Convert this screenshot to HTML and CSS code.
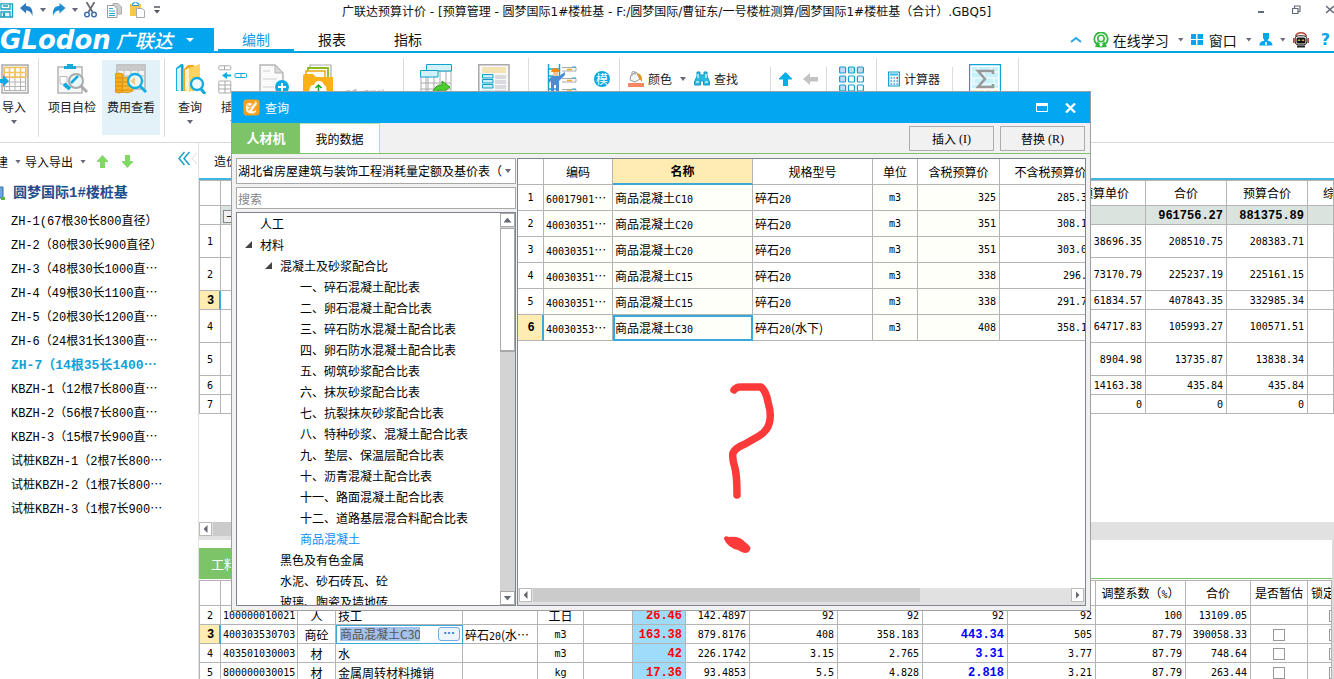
FILE: index.html
```html
<!DOCTYPE html>
<html lang="zh-CN">
<head>
<meta charset="utf-8">
<title>广联达预算计价</title>
<link rel="stylesheet" href="styles.css">
</head>
<body>
<div class="app">

<header class="titlebar">
  <div class="quick">
    <button aria-label="保存"><svg width="14" height="15" viewBox="0 0 14 15"><path d="M-1 .8H12.5V14H-1M1 1V6H10V1M3 3H8M1 14V9H10V14" fill="#e9f8fd" stroke="#1b9fc0" stroke-width="1.3"/><path d="M4 10v4" stroke="#1b9fc0" stroke-width="2"/></svg></button>
    <button aria-label="撤销"><svg width="14" height="14" viewBox="0 0 14 14"><path d="M0 5L6 0V3C11 3 13 6 12.5 13C11 9 9 7.500 6 7.500V10.500Z" fill="#2f79c0"/></svg></button>
    <i class="caret"></i>
    <button aria-label="重做"><svg width="14" height="14" viewBox="0 0 14 14"><path d="M13.500 5L7.500 0V3C2.500 3 .5 6 1 13C2.500 9 4.500 7.500 7.500 7.500V10.500Z" fill="#1d8fd0"/></svg></button>
    <i class="caret"></i>
    <button class="cut" aria-label="剪切"><svg width="13" height="16" viewBox="0 0 13 16"><path d="M2.500 0L8.500 10M10.500 0L4.500 10" stroke="#6b6b73" stroke-width="1.800"/><circle cx="3" cy="12.500" r="2.300" fill="none" stroke="#3f6da8" stroke-width="1.500"/><circle cx="10" cy="12.500" r="2.300" fill="none" stroke="#3f6da8" stroke-width="1.500"/></svg></button>
    <button class="copy" aria-label="复制"><svg width="15" height="15" viewBox="0 0 15 15"><path d="M6 .5H11L14.500 4V11H6Z" fill="#cfcfcf" stroke="#aaa"/><path d="M.5 2.500H7L10 5.500V14.500H.5Z" fill="#fff" stroke="#9a9a9a"/><path d="M2 5.500H6M2 8H8M2 10.500H8M2 12.500H8" stroke="#2aa5cf"/></svg></button>
    <button aria-label="粘贴"><svg width="15" height="16" viewBox="0 0 15 16"><path d="M0 2H11V14H0Z" fill="#fcc64c"/><path d="M2.500 3.500H8.500V1.500H7V0H4V1.500H2.500Z" fill="#fff" stroke="#12a4cf"/><path d="M6.500 6.500H12L14.500 8.500V15.500H6.500Z" fill="#fff" stroke="#aaa"/></svg></button>
    <svg class="more" width="6" height="8" viewBox="0 0 6 8"><path d="M0 1H6" stroke="#555560" stroke-width="1.500"/><path d="M0 4H6L3 7.500Z" fill="#555560"/></svg>
  </div>
  <h1>广联达预算计价 - [预算管理 - 圆梦国际1#楼桩基 - F:/圆梦国际/曹钲东/一号楼桩测算/圆梦国际1#楼桩基（合计）.GBQ5]</h1>
  <div class="winctl">
    <button aria-label="最小化"><svg width="9" height="9" viewBox="0 0 9 9"><path d="M1 7H7" stroke="#666b7c" stroke-width="2"/></svg></button>
    <button aria-label="还原"><svg width="9" height="9" viewBox="0 0 9 9"><path d="M2.500 3V1H8V6.500H6.500M.5 3.500H6V8.500H.5Z" fill="none" stroke="#666b7c" stroke-width="1.200"/></svg></button>
    <button aria-label="关闭"><svg width="8" height="9" viewBox="0 0 8 9"><path d="M0 1L8 8M8 1L0 8" stroke="#666b7c" stroke-width="1.600"/></svg></button>
  </div>
</header>

<nav class="menubar">
  <div class="logo"><span class="word">GLodon</span><span class="han">广联达</span><svg width="8" height="4" viewBox="0 0 8 4"><path d="M0 0H8L4 4Z" fill="#fff"/></svg></div>
  <a href="#" class="mtab on">编制</a><a href="#" class="mtab">报表</a><a href="#" class="mtab">指标</a>
  <div class="mright">
    <svg class="chev" width="12" height="7" viewBox="0 0 12 7"><path d="M1 6L6 2L11 6" fill="none" stroke="#2aa9e6" stroke-width="2"/></svg>
    <button class="learn"><svg width="16" height="16" viewBox="0 0 16 16"><circle cx="8" cy="7" r="6.700" fill="none" stroke="#2fb83c" stroke-width="1.800"/><circle cx="8" cy="6.500" r="3.200" fill="#fff" stroke="#2fb83c" stroke-width="1.500"/><path d="M2 15L4.500 9.500L8 12.500L11.500 9.500L14 15L8 15.500Z" fill="#2fb83c"/><path d="M6 12H10L8 15Z" fill="#fff"/></svg>在线学习</button>
    <i class="caret"></i>
    <button class="win"><svg width="12" height="11" viewBox="0 0 12 11"><path d="M0 0H5V5H0ZM6.500 0H12V5H6.500ZM0 6H5V11H0ZM6.500 6H12V11H6.500Z" fill="#03a6ee"/></svg>窗口</button>
    <i class="caret"></i>
    <button aria-label="用户"><svg width="14" height="13" viewBox="0 0 14 13"><path d="M4 0H10V5L8.500 7.500C12 8.500 13.500 9.500 13.500 12.500H.5C.5 9.500 2 8.500 5.500 7.500L4 5Z" fill="#03a6ee"/><path d="M6.500 9L7 12L7.500 9" stroke="#fff"/></svg></button>
    <i class="caret"></i>
    <button aria-label="助手"><svg width="16" height="16" viewBox="0 0 16 16"><path d="M2.500 4.500Q3.500 .8 8 .8Q12.500 .8 13.500 4.500" fill="none" stroke="#b7453a" stroke-width="1.600"/><path d="M.8 6V11M15.200 6V11" stroke="#b7453a" stroke-width="1.600"/><rect x="2.200" y="3.800" width="11.600" height="9" rx="3" fill="#fff" stroke="#222"/><rect x="3.500" y="5.500" width="9" height="6" rx="1.500" fill="#111"/><path d="M5 9L6 7.500L7 9M9 9L10 7.500L11 9" fill="none" stroke="#f2d64a"/><path d="M4 14.500H12" stroke="#222" stroke-width="2"/></svg></button>
    <button class="help">?</button>
  </div>
</nav>

<div class="ribbon">
  <button class="rb w28"><svg width="30" height="30" viewBox="0 0 30 30"><path d="M3 1H29V29H3Z" fill="#f4f4f4" stroke="#aaa" stroke-width="1.500"/><path d="M5 3H27V27H5Z" fill="#fff"/><path d="M5.500 3V27M10.500 3V27M16 3V27M21.500 3V27M26.500 3V27M5 13.500H27M5 18H27M5 22.500H27M5 26.500H27" stroke="#b3b3b3"/><path d="M5 3.500H27V8.500H5ZM10.500 3V13M16 3V13M21.500 3V13M5 8.500V13H27V8" fill="none" stroke="#f8c15c" stroke-width="1.500"/><path d="M0 15H4V11L10 17L4 23V19H0Z" fill="#08aeea"/></svg><span>导入</span><i class="caret"></i></button>
  <i class="sep ml10"></i>
  <button class="rb w58 ml4"><svg width="32" height="30" viewBox="0 0 32 30"><path d="M2 3H26V29H2Z" fill="#f8f8f8" stroke="#b5b5b5" stroke-width="1.500"/><path d="M11 0H17V2H20V5H8V2H11Z" fill="#18a9d8"/><path d="M4 12.500H11V20H4Z" fill="#fff" stroke="#bbb"/><path d="M8 20L14 25" stroke="#12abdc" stroke-width="4"/><circle cx="20" cy="17" r="7" fill="#e9f6fa" stroke="#aaa" stroke-width="2"/><path d="M15 19L22 12" stroke="#18a9d8" stroke-width="2.500"/><path d="M25 22L31 28" stroke="#aaa" stroke-width="3"/></svg><span>项目自检</span></button>
  <button class="rb w58 ml1 hot"><svg width="32" height="30" viewBox="0 0 32 30"><path d="M2 1H30V25H2Z" fill="#f3f3f3" stroke="#b5b5b5" stroke-width="1.500"/><path d="M2 2H30V7H2Z" fill="#c9c9c9"/><path d="M2 12H30M2 17H30M9 7V25M16 7V25M23 7V25" stroke="#bbb"/><path d="M0 10Q4 8 8 10V28Q4 30 0 28Z" fill="#f9ae17" stroke="#d68b13" stroke-width=".8"/><path d="M8 14Q13 12 18 14V27Q13 30 7 28Z" fill="#fbb930" stroke="#d68b13" stroke-width=".8"/><path d="M0 14H8M0 18H8M0 22H17M0 26H17M8 18H15" stroke="#d68b13"/><circle cx="20" cy="17" r="7" fill="#f0f5ee" stroke="#12aee4" stroke-width="2.300"/><path d="M15 17L20 13V21Z" fill="#f6c98b"/><path d="M25 22L31 28" stroke="#12aee4" stroke-width="3"/></svg><span>费用查看</span></button>
  <i class="sep ml4"></i>
  <button class="rb w30 ml10"><svg width="31" height="30" viewBox="0 0 31 30"><path d="M1 4L6 0H8V27H1Z" fill="#1caed8"/><path d="M2 5L6 3V28L2 26Z" fill="#d8f3fb"/><path d="M9 5L13 1H19V27H9Z" fill="#efa81f"/><path d="M10 6L14 4V28L10 26Z" fill="#fff2cc"/><path d="M14 4L25 0V24L14 28Z" fill="#ffd35f"/><path d="M8 1V27" stroke="#128db7"/><circle cx="22" cy="20" r="6" fill="#effafd" stroke="#0faae0" stroke-width="2.300"/><path d="M26 25L30 30" stroke="#0faae0" stroke-width="3"/></svg><span>查询</span><i class="caret"></i></button>
  <button class="rb w30 ml13"><svg width="30" height="30" viewBox="0 0 30 30"><rect x=".8" y="1.800" width="12" height="4" rx="1" fill="#fff" stroke="#aaa"/><path d="M6.500 2V6" stroke="#aaa"/><rect x=".8" y="17" width="12" height="12" rx="1" fill="#fff" stroke="#aaa"/><path d="M1 21H13M1 25H13M7 17V29" stroke="#aaa"/><path d="M4 11.500L9 8V10.500H13V12.500H9V15Z" fill="#0faae0"/><rect x="17" y="9.500" width="11.500" height="4" rx="1" fill="#fff" stroke="#0faae0"/><path d="M23 9.500V13" stroke="#0faae0"/></svg><span>插入</span><i class="caret"></i></button>
  <button class="rb w30 ml11" aria-label="补充"><svg width="30" height="30" viewBox="0 0 30 30"><path d="M1 1H16L24 9V30H1Z" fill="#fafafa" stroke="#b5b5b5" stroke-width="1.500"/><path d="M16 1V9H24Z" fill="#d9d9d9" stroke="#b5b5b5"/><path d="M4 7H11M4 15H18M4 23H15" stroke="#ddd" stroke-width="1.500"/><circle cx="23" cy="23" r="7" fill="#0faae6"/><path d="M19 23H27M23 19V27" stroke="#fff" stroke-width="2"/></svg></button>
  <button class="rb w30 ml14" aria-label="存档"><svg width="30" height="30" viewBox="0 0 30 30"><path d="M7 8V1H28V14" fill="#fff" stroke="#aaa" stroke-width="1.200"/><path d="M5 10V4H25V14" fill="#fff" stroke="#8aba1c" stroke-width="1.800"/><path d="M3 12V7H22V14" fill="#fff" stroke="#e9a716" stroke-width="1.500"/><path d="M0 12Q0 10 2 10H10L13 13H30V30H0Z" fill="#fcb116"/><path d="M8 29Q5 27 7 24Q7 21 11 21Q12 17 16 17Q20 17 21 21Q24 22 23 25Q25 28 22 29Z" fill="#fff"/><path d="M15.500 28V21M12.500 24L15.500 21L18.500 24" fill="none" stroke="#18a81e" stroke-width="1.500"/></svg></button>
  <button class="rb w40 ml12" aria-label="更多"><svg width="40" height="30" viewBox="0 0 40 30"><path d="M0 28L4 26L6 28L11 25V30H0ZM19 27H23V26M25 27H31M33 27H36M38 25V30" fill="#ccc" stroke="#bbb"/></svg></button>
  <i class="sep ml18"></i>
  <button class="rb w32 ml16" aria-label="载价"><svg width="32" height="30" viewBox="0 0 32 30"><path d="M6 7H31V30H6Z" fill="#fff" stroke="#aaa"/><path d="M1 13V30M1 19H31M1 25H31M8 13V30M14 13V30M20 7V30M26 7V30" stroke="#aaa" fill="none"/><path d="M6.500 .5H31.500V7H6.500Z" fill="#d2f1fa" stroke="#0fa2cb"/><path d="M.5 6.500H18V13H.5Z" fill="#d2f1fa" stroke="#0fa2cb"/><path d="M12 30Q15 20 22 21V17L30 23L22 29V26Q16 26 15 30Z" fill="#4fcb32" stroke="#2e9e1c"/></svg></button>
  <button class="rb w32 ml26" aria-label="汇总"><svg width="32" height="30" viewBox="0 0 32 30"><path d="M.8 .8H31V31H.8Z" fill="#f8f8f8" stroke="#aaa" stroke-width="1.500"/><path d="M4 3H28V9H4Z" fill="#f4e3b5"/><path d="M17 11H28V15H17ZM17 16H28V20H17ZM17 21H28V25H17ZM17 26H28V30H17Z" fill="#d9d9de"/><path d="M4.500 10.500H15V14H4.500ZM4.500 15.500H15V19H4.500ZM4.500 20.500H15V24H4.500Z" fill="#c8eef9" stroke="#159fc9"/><path d="M4 26H16V30H4Z" fill="#c6ebf7"/></svg></button>
  <i class="sep ml18"></i>
  <button class="rb w30 ml18" aria-label="人工"><svg width="30" height="30" viewBox="0 0 30 30"><path d="M1.500 0V30M12.500 0V14M1 5H12M1 12H6M1 25H10" stroke="#19a7cf" stroke-width="1.500"/><path d="M4 8Q5 4 8 4Q12 4 13 8Z" fill="#f58b12"/><path d="M6 8H11V12H6Z" fill="#f3c394"/><path d="M2 15L5 12H12L18 8V11L12 17V28H9V21H7V29H4V17L2 19Z" fill="#4b8ed4"/><path d="M15 3.500H29V7H15M15 14.500H29V18H15M15 25.500H29V29H15" fill="#fafafa" stroke="#aaa"/><path d="M20 5.500H25M20 16.500H25M20 27H25" stroke="#f6a82d" stroke-width="1.500"/><path d="M25 3H29M25 14H29M25 25H29" stroke="#29a9d6"/></svg></button>
  <button class="rs ml17"><span class="mo">模</span></button>
  <i class="sep ml9"></i>
  <button class="rs txt ml8"><svg width="16" height="16" viewBox="0 0 16 16"><path d="M3 4L8 1L12 8L7 11L2 9Z" fill="#f7f7f7" stroke="#999"/><path d="M4 5V1Q6-1 7 1V4" fill="none" stroke="#999"/><path d="M9 2Q15 3 14 11L11 7Z" fill="#e5921c"/><path d="M0 12H16V16H0Z" fill="#f98663"/></svg>颜色<i class="caret lead"></i></button>
  <button class="rs txt ml8"><svg width="16" height="16" viewBox="0 0 16 16"><path d="M3 1H6V4H10V1H13V5L15.500 11V14H9.500V10H6.500V14H.5V11L3 5Z" fill="#2eb8dd" stroke="#1399c4"/><path d="M2 11H5M11 11H14M4 3V7M12 3V7" stroke="#bdeefa" stroke-width="1.500"/></svg>查找</button>
  <i class="sep short ml32"></i>
  <button class="rs ml8" aria-label="上移"><svg width="13" height="16" viewBox="0 0 13 16"><path d="M6.500 1L13 7.500V8.500H9V15H4V8.500H0V7.500Z" fill="#08aeea"/></svg></button>
  <button class="rs ml11" aria-label="左移"><svg width="15" height="16" viewBox="0 0 15 16"><path d="M0 8L7 2V6H15V10.500H7V14Z" fill="#c3c3c3"/></svg></button>
  <i class="sep short ml8"></i>
  <button class="rs grid ml12" aria-label="网格"><svg width="25" height="27" viewBox="0 0 25 27"><g fill="#bfdcec" stroke="#13a0cb" stroke-width="1.200"><rect x=".6" y="1" width="6" height="6" rx="1"/><rect x="9.500" y="1" width="6" height="6" rx="1"/><rect x="18.400" y="1" width="6" height="6" rx="1"/><rect x=".6" y="10" width="6" height="6" rx="1"/><rect x="9.500" y="10" width="6" height="6" rx="1" fill="#fff"/><rect x="18.400" y="10" width="6" height="6" rx="1" fill="#fff"/><rect x=".6" y="19" width="6" height="6" rx="1"/><rect x="9.500" y="19" width="6" height="6" rx="1" fill="#fff"/><rect x="18.400" y="19" width="6" height="6" rx="1" fill="#fff"/></g></svg></button>
  <i class="sep ml12"></i>
  <button class="rs txt ml11"><svg width="12" height="16" viewBox="0 0 12 16"><path d="M.6 1H11.400V15H.6Z" fill="#e9f8fd" stroke="#19a0ce" stroke-width="1.200"/><path d="M2 2.500H10V4.500H2Z" fill="#36bde4"/><path d="M2.500 7H4M5.500 7H7M2.500 10H4M5.500 10H7M8.500 10H10M2.500 13H4M5.500 13H7M8.500 13H10" stroke="#579dcd" stroke-width="1.500"/><path d="M8.500 7H10" stroke="#ef3e2c" stroke-width="2"/></svg>计算器</button>
  <i class="sep short ml12"></i>
  <button class="rb w32 ml16" aria-label="合计"><svg width="32" height="30" viewBox="0 0 32 30"><path d="M.6 .6H31.400V30H.6Z" fill="#fff" stroke="#0fa5d2" stroke-width="1.200"/><path d="M3 3H29V24H3Z" fill="#c9f1fa"/><path d="M3 8H29M3 14H29M3 20H29M9 3V8M22 3V8M15 8V14M5 14V20M25 14V20" stroke="#fff"/><path d="M3 26H8V30H3ZM10 26H15V30H10ZM17 26H22V30H17ZM24 26H29V30H24Z" fill="#faeab8"/><path d="M24 10V7H9L16 15L9 23H24V20" fill="none" stroke="#999" stroke-width="2.500"/></svg></button>
  <i class="sep ml17"></i>
</div>

<main class="main">
  <aside class="side">
    <div class="stools">
      <button class="newb">新建</button><i class="caret"></i><button>导入导出</button><i class="caret"></i>
      <button class="up" aria-label="上移"><svg width="11" height="13" viewBox="0 0 11 13"><path d="M5.500 0L11 6V7H8V13H3V7H0V6Z" fill="#80d865"/></svg></button>
      <button class="dn" aria-label="下移"><svg width="11" height="13" viewBox="0 0 11 13"><path d="M5.500 13L11 7V6H8V0H3V6H0V7Z" fill="#80d865"/></svg></button>
      <button class="fold" aria-label="收起"><svg width="20" height="16" viewBox="0 0 20 16"><path d="M6.500 1L1 7.500L6.500 14M11.500 1L6 7.500L11.500 14" fill="none" stroke="#1e9fc6" stroke-width="1.500"/><path d="M19 2L14 7.500L19 13" fill="none" stroke="#ddd"/></svg></button>
    </div>
    <div class="proj"><svg width="5" height="14" viewBox="0 0 5 14"><path d="M0 1H3V12H0" fill="#6da5d8" stroke="#336fa8"/><path d="M1 11H5V14H1Z" fill="#56b53b"/></svg>圆梦国际1#楼桩基</div>
    <ul class="list">
      <li>ZH-1(67根30长800直径）</li>
      <li>ZH-2（80根30长900直径）</li>
      <li>ZH-3（48根30长1000直<span class="c">…</span></li>
      <li>ZH-4（49根30长1100直<span class="c">…</span></li>
      <li>ZH-5（20根30长1200直<span class="c">…</span></li>
      <li>ZH-6（24根31长1300直<span class="c">…</span></li>
      <li class="cur">ZH-7（14根35长1400<span class="c">…</span></li>
      <li>KBZH-1（12根7长800直<span class="c">…</span></li>
      <li>KBZH-2（56根7长800直<span class="c">…</span></li>
      <li>KBZH-3（15根7长900直<span class="c">…</span></li>
      <li>试桩KBZH-1（2根7长800<span class="c">…</span></li>
      <li>试桩KBZH-2（1根7长800<span class="c">…</span></li>
      <li>试桩KBZH-3（1根7长900<span class="c">…</span></li>
    </ul>
  </aside>

  <section class="work">
    <div class="upper">
      <div class="utabs"><a href="#">造价分析</a></div>
      <table class="grid1">
        <colgroup><col class="k21"><col><col class="k81"><col class="k81"><col class="k81"><col class="k26"></colgroup>
        <thead><tr><th></th><th></th><th>预算单价</th><th>合价</th><th>预算合价</th><th class="cut">综合单价</th></tr></thead>
        <tbody>
          <tr class="sum"><td class="rn"></td><td class="tree"><button aria-label="折叠">−</button></td><td></td><td class="num">961756.27</td><td class="num">881375.89</td><td></td></tr>
          <tr class="tall"><td class="rn">1</td><td></td><td class="num">38696.35</td><td class="num">208510.75</td><td class="num">208383.71</td><td></td></tr>
          <tr class="tall"><td class="rn">2</td><td></td><td class="num">73170.79</td><td class="num">225237.19</td><td class="num">225161.15</td><td></td></tr>
          <tr><td class="rn sel">3</td><td></td><td class="num">61834.57</td><td class="num">407843.35</td><td class="num">332985.34</td><td></td></tr>
          <tr class="tall"><td class="rn">4</td><td></td><td class="num">64717.83</td><td class="num">105993.27</td><td class="num">100571.51</td><td></td></tr>
          <tr class="tall"><td class="rn">5</td><td></td><td class="num">8904.98</td><td class="num">13735.87</td><td class="num">13838.34</td><td></td></tr>
          <tr><td class="rn">6</td><td></td><td class="num">14163.38</td><td class="num">435.84</td><td class="num">435.84</td><td></td></tr>
          <tr><td class="rn">7</td><td></td><td class="num">0</td><td class="num">0</td><td class="num">0</td><td></td></tr>
        </tbody>
      </table>
    </div>
    <div class="hbar wide"><button aria-label="向左"><i class="al"></i></button><span class="thumb"></span></div>
    <div class="lower">
      <div class="ltabs"><a href="#">工料机显示</a></div>
      <table class="grid2">
        <colgroup><col class="k21"><col class="k77"><col class="k38"><col class="k127"><col class="k75"><col class="k46"><col class="k49"><col class="k53"><col class="k64"><col class="k88"><col class="k85"><col class="k85"><col class="k88"><col class="k90"><col class="k65"><col class="k57"><col></colgroup>
        <thead><tr><th></th><th></th><th></th><th></th><th></th><th></th><th></th><th></th><th></th><th></th><th></th><th></th><th></th><th>调整系数（<span class="n">%</span>）</th><th>合价</th><th>是否暂估</th><th class="lock">锁定</th></tr></thead>
        <tbody>
          <tr><td class="rn">2</td><td class="n">100000010021</td><td class="mid">人</td><td>技工</td><td></td><td class="mid">工日</td><td></td><td class="num red">26.46</td><td class="num">142.4897</td><td class="num">92</td><td class="num">92</td><td class="num">92</td><td class="num">92</td><td class="num">100</td><td class="num">13109.05</td><td></td><td class="box2"><input type="checkbox" aria-label="锁定"></td></tr>
          <tr><td class="rn sel">3</td><td class="n">400303530703</td><td class="mid">商砼</td><td class="edit"><div><input type="text" value="商品混凝土C30" aria-label="名称"><button>···</button></div></td><td>碎石<span class="n">20</span>(水…</td><td class="mid n">m3</td><td></td><td class="num red">163.38</td><td class="num">879.8176</td><td class="num">408</td><td class="num">358.183</td><td class="num blue">443.34</td><td class="num">505</td><td class="num">87.79</td><td class="num">390058.33</td><td class="mid"><input type="checkbox" aria-label="是否暂估"></td><td class="box2"><input type="checkbox" aria-label="锁定"></td></tr>
          <tr><td class="rn">4</td><td class="n">403501030003</td><td class="mid">材</td><td>水</td><td></td><td class="mid n">m3</td><td></td><td class="num red">42</td><td class="num">226.1742</td><td class="num">3.15</td><td class="num">2.765</td><td class="num blue">3.31</td><td class="num">3.77</td><td class="num">87.79</td><td class="num">748.64</td><td class="mid"><input type="checkbox" aria-label="是否暂估"></td><td class="box2"><input type="checkbox" aria-label="锁定"></td></tr>
          <tr><td class="rn">5</td><td class="n">800000030015</td><td class="mid">材</td><td>金属周转材料摊销</td><td></td><td class="mid n">kg</td><td></td><td class="num red">17.36</td><td class="num">93.4853</td><td class="num">5.5</td><td class="num">4.828</td><td class="num blue">2.818</td><td class="num">3.21</td><td class="num">87.79</td><td class="num">263.44</td><td class="mid"><input type="checkbox" aria-label="是否暂估"></td><td class="box2"><input type="checkbox" aria-label="锁定"></td></tr>
        </tbody>
      </table>
    </div>
  </section>
</main>

<div class="dialog" role="dialog" aria-label="查询">
  <div class="dtitle">
    <svg width="17" height="17" viewBox="0 0 17 17"><rect x=".5" y=".5" width="16" height="16" rx="3" fill="#f7a01f"/><path d="M3 6Q6 2 9 5L13 2L14 5L9 12Q12 13 13 10Q14 15 8 14.500Q3 14 3 10Z" fill="#fff3dc"/><path d="M4 6L7 8L12 3M5 11L8 9" fill="none" stroke="#f3a437" stroke-width="1.200"/></svg>
    <span>查询</span>
    <button class="dmax" aria-label="最大化"><svg width="12" height="9" viewBox="0 0 12 9"><path d="M.5 .5H11.500V8.500H.5Z" fill="none" stroke="#fff"/><path d="M0 1.500H12" stroke="#fff" stroke-width="3"/></svg></button>
    <button class="dcls" aria-label="关闭"><svg width="11" height="10" viewBox="0 0 11 10"><path d="M1 .5L10 9.500M10 .5L1 9.500" stroke="#fff" stroke-width="2.300"/></svg></button>
  </div>
  <div class="dtabs">
    <button class="t1">人材机</button><button class="t2">我的数据</button>
    <span class="fill"></span>
    <button class="act">插入<span class="s">(I)</span></button><button class="act">替换<span class="s">(R)</span></button>
  </div>
  <div class="dbody">
    <div class="lpane">
      <div class="combo"><select aria-label="定额"><option>湖北省房屋建筑与装饰工程消耗量定额及基价表（</option></select><i class="caret"></i></div>
      <input class="search" type="text" placeholder="搜索" aria-label="搜索">
      <div class="treebox">
        <ul class="nodes">
          <li class="l1">人工</li>
          <li class="l1 open">材料</li>
          <li class="l2 open">混凝土及砂浆配合比</li>
          <li class="l3">一、碎石混凝土配比表</li>
          <li class="l3">二、卵石混凝土配合比表</li>
          <li class="l3">三、碎石防水混凝土配合比表</li>
          <li class="l3">四、卵石防水混凝土配合比表</li>
          <li class="l3">五、砌筑砂浆配合比表</li>
          <li class="l3">六、抹灰砂浆配合比表</li>
          <li class="l3">七、抗裂抹灰砂浆配合比表</li>
          <li class="l3">八、特种砂浆、混凝土配合比表</li>
          <li class="l3">九、垫层、保温层配合比表</li>
          <li class="l3">十、沥青混凝土配合比表</li>
          <li class="l3">十一、路面混凝土配合比表</li>
          <li class="l3">十二、道路基层混合料配合比表</li>
          <li class="l3 act3">商品混凝土</li>
          <li class="l2">黑色及有色金属</li>
          <li class="l2">水泥、砂石砖瓦、砼</li>
          <li class="l2">玻璃、陶瓷及墙地砖</li>
        </ul>
        <div class="vbar"><button aria-label="向上"><i class="au"></i></button><span class="vthumb"></span><span class="vtrack"></span><button aria-label="向下"><i class="ad"></i></button></div>
      </div>
    </div>
    <div class="rpane">
      <table class="grid3">
        <colgroup><col class="k26"><col class="k69"><col><col class="k120"><col class="k45"><col class="k82"><col class="k102"></colgroup>
        <thead><tr><th></th><th>编码</th><th class="hsel">名称</th><th>规格型号</th><th>单位</th><th>含税预算价</th><th>不含税预算价</th></tr></thead>
        <tbody>
          <tr><td class="rn">1</td><td class="iv"><span class="n">60017901</span>…</td><td class="iv">商品混凝土<span class="n">C10</span></td><td>碎石<span class="n">20</span></td><td class="iv mid n">m3</td><td class="iv num">325</td><td class="num far">285.3</td></tr>
          <tr><td class="rn">2</td><td class="iv"><span class="n">40030351</span>…</td><td class="iv">商品混凝土<span class="n">C20</span></td><td>碎石<span class="n">20</span></td><td class="iv mid n">m3</td><td class="iv num">351</td><td class="num far">308.1</td></tr>
          <tr><td class="rn">3</td><td class="iv"><span class="n">40030351</span>…</td><td class="iv">商品混凝土<span class="n">C20</span></td><td>碎石<span class="n">20</span></td><td class="iv mid n">m3</td><td class="iv num">351</td><td class="num far">303.0</td></tr>
          <tr><td class="rn">4</td><td class="iv"><span class="n">40030351</span>…</td><td class="iv">商品混凝土<span class="n">C15</span></td><td>碎石<span class="n">20</span></td><td class="iv mid n">m3</td><td class="iv num">338</td><td class="num far">296.</td></tr>
          <tr><td class="rn">5</td><td class="iv"><span class="n">40030351</span>…</td><td class="iv">商品混凝土<span class="n">C15</span></td><td>碎石<span class="n">20</span></td><td class="iv mid n">m3</td><td class="iv num">338</td><td class="num far">291.7</td></tr>
          <tr><td class="rn sel">6</td><td class="iv"><span class="n">40030353</span>…</td><td class="iv focus">商品混凝土<span class="n">C30</span></td><td>碎石<span class="n">20</span>(水下)</td><td class="iv mid n">m3</td><td class="iv num">408</td><td class="num far">358.1</td></tr>
        </tbody>
      </table>
      <div class="hbar inner"><button aria-label="向左"><i class="al"></i></button><span class="thumb"></span><span class="fill"></span><button aria-label="向右"><i class="ar"></i></button></div>
      <svg class="mark" width="60" height="180" viewBox="0 0 60 180"><path d="M14 12Q16 9 21 9H41Q46 13 48 24Q52 37 49 46Q47 53 39 58L25 66Q15 70 13 75Q12 80 15 90Q17 98 17 117" fill="none" stroke="#fd3a3a" stroke-width="7.500" stroke-linecap="round" stroke-linejoin="round"/><path d="M4 161Q4 157 9 159Q20 158 25 164Q32 169 30 172Q27 178 18 172Q8 170 4 161Z" fill="#fd3a3a"/></svg>
    </div>
  </div>
</div>

</div>
</body>
</html>
```

FILE: styles.css
```css
* { box-sizing: border-box; }
html, body { height: 100%; margin: 0; }
body { font: 12px/16px "Noto Sans CJK SC", sans-serif; color: #111; background: #fff; overflow: hidden; }
button { border: 0; padding: 0; margin: 0; background: none; font: inherit; color: inherit; display: flex; align-items: center; flex: none; white-space: nowrap; }
svg { display: block; flex: none; overflow: hidden; }
a { color: inherit; text-decoration: none; }
ul { list-style: none; margin: 0; padding: 0; }
.app { position: relative; height: 100vh; display: flex; flex-direction: column; overflow: hidden; }
.caret { width: 6px; height: 4px; background: #666a78; clip-path: polygon(0 0, 100% 0, 50% 100%); flex: none; }
.fill { flex: 1; }

/* title bar */
.titlebar { height: 28px; flex: none; display: flex; padding-top: 2px; }
.titlebar h1 { margin: 0; font-size: 12px; font-weight: 400; line-height: 20px; font-family: "DejaVu Sans", "Noto Sans CJK SC", sans-serif; white-space: nowrap; }
.quick { width: 342px; flex: none; display: flex; align-items: center; height: 16px; gap: 6px; }
.quick .cut { margin-right: 4px; }
.quick .copy { margin-right: 2px; }
.quick .more { margin-left: 3px; }
.winctl { width: 77px; flex: none; margin-left: auto; display: flex; height: 14px; align-items: center; justify-content: space-between; }

/* menu bar */
.menubar { height: 25px; flex: none; display: flex; border-bottom: 2px solid #03a3e6; }
.logo { width: 214px; height: 24px; flex: none; background: #03a5ef; color: #fff; display: flex; align-items: center; gap: 5px; }
.logo .word { font: italic bold 26px/24px "DejaVu Sans", sans-serif; }
.logo .han { font-size: 19px; font-style: italic; font-weight: 500; line-height: 24px; margin-right: 8px; }
.mtab { width: 76px; font-size: 14px; line-height: 22px; text-align: center; }
.mtab.on { margin-left: 4px; color: #0d9de4; border-bottom: 2px solid #03a3e6; }
.mright { margin-left: auto; display: flex; align-items: center; gap: 7px; padding-right: 4px; font-size: 14px; }
.chev { margin-right: 4px; }
.learn svg { margin-right: 4px; }
.learn, .win { margin-right: 2px; }
.win svg { margin-right: 6px; }
.help { font: bold 16px/20px "DejaVu Sans", sans-serif; color: #03a6ee; margin-left: 5px; }

/* ribbon */
.ribbon { height: 90px; flex: none; display: flex; align-items: flex-start; border-bottom: 1px solid #d9d9d9; color: #222; overflow: hidden; }
.rb { flex-direction: column; height: 75px; margin-top: 7px; padding-top: 4px; }
.rb span { margin-top: 5px; }
.rb .caret { margin-top: 5px; }
.hot { background: #e2f2f8; }
.rs { height: 20px; margin-top: 16px; }
.txt svg { margin-right: 4px; }
.rs .caret.lead { margin-left: 8px; }
.rs.grid { height: 27px; margin-top: 13px; }
.mo { width: 16px; height: 16px; border-radius: 8px; background: #0fa9e0; color: #fff; line-height: 16px; text-align: center; }
.sep { width: 1px; height: 79px; margin-top: 5px; background: #dcdcdc; flex: none; }
.sep.short { height: 26px; margin-top: 14px; }
.w28 { width: 28px; } .w30 { width: 30px; } .w32 { width: 32px; } .w40 { width: 40px; } .w58 { width: 58px; }
.ml1 { margin-left: 1px; } .ml4 { margin-left: 4px; } .ml8 { margin-left: 8px; } .ml9 { margin-left: 9px; }
.ml10 { margin-left: 10px; } .ml11 { margin-left: 11px; } .ml12 { margin-left: 12px; } .ml13 { margin-left: 13px; }
.ml14 { margin-left: 14px; } .ml16 { margin-left: 16px; } .ml17 { margin-left: 17px; } .ml18 { margin-left: 18px; }
.ml26 { margin-left: 26px; } .ml32 { margin-left: 32px; }

/* project list */
.main { flex: 1; display: flex; min-height: 0; }
.side { width: 199px; flex: none; border-right: 1px solid #e2e2e2; overflow: hidden; }
.stools { height: 37px; display: flex; align-items: center; }
.stools .newb { margin-left: -16px; }
.stools .caret { margin: 0 4px 0 7px; }
.stools .up { margin-left: 7px; }
.stools .dn { margin-left: 14px; }
.stools .fold { margin: 0 0 6px auto; }
.proj { height: 28px; padding-bottom: 2px; display: flex; align-items: center; gap: 8px; font: bold 14px/20px "Liberation Mono", "Noto Sans CJK SC", monospace; color: #1e4d8c; white-space: nowrap; }
.list { padding-top: 2px; }
.list li { height: 24px; padding-left: 11px; font: 12px/24px "Liberation Mono", "Noto Sans CJK SC", monospace; white-space: nowrap; color: #000; }
.list .c { font-family: "Noto Sans CJK SC", sans-serif; line-height: 1px; }
.list .cur { font-size: 13px; font-weight: 700; color: #0ea2d8; }

/* tables */
table { border-collapse: separate; border-spacing: 0; table-layout: fixed; width: 100%; border-top: 1px solid #b4b4b4; color: #000; }
th, td { border: 0 solid #b4b4b4; border-width: 0 1px 1px 0; padding: 0 2px; white-space: nowrap; overflow: hidden; line-height: 16px; vertical-align: middle; }
th { font-weight: 400; height: 25px; text-align: center; padding: 0; }
td { height: 19px; }
.n, .num, .rn { font-family: "DejaVu Sans Mono", "Noto Sans CJK SC", monospace; font-size: 10px; }
span.n { line-height: 1px; }
td.num { text-align: right; padding-right: 3px; }
.rn, td.mid { text-align: center; }
.rn.sel { background: #ffecb3; border-right: 2px solid #3aa8d8; font: bold 12px/16px "Liberation Mono", monospace; padding-right: 0; }
.k21 { width: 21px; } .k26 { width: 26px; } .k38 { width: 38px; } .k45 { width: 45px; } .k46 { width: 46px; }
.k49 { width: 49px; } .k53 { width: 53px; } .k57 { width: 57px; } .k64 { width: 64px; } .k65 { width: 65px; } .k69 { width: 69px; }
.k75 { width: 75px; } .k77 { width: 77px; } .k81 { width: 81px; } .k82 { width: 82px; } .k85 { width: 85px; } .k88 { width: 88px; }
.k90 { width: 90px; } .k102 { width: 102px; } .k120 { width: 120px; } .k127 { width: 127px; }

.work { flex: 1; min-width: 0; display: flex; flex-direction: column; }
.upper { flex: 1; min-height: 0; overflow: hidden; }
.utabs { height: 37px; border-bottom: 2px solid #42b4e0; padding: 10px 15px 0; }
.grid1, .grid2 { border-left: 1px solid #b4b4b4; }
.grid1 td, .grid2 td { padding-top: 2px; }
.grid2 td { line-height: 14px; }
.grid1 .tall td { height: 33px; }
.grid1 .cut { text-align: left; padding-left: 15px; }
.sum td { background: #dbe3df; }
.sum td.rn { background: #fff; }
.sum td.num { font: bold 12px/16px "Liberation Mono", monospace; }
.tree button { width: 13px; height: 13px; border: 1px solid #888; background: #f0f0f0; justify-content: center; line-height: 10px; }

.hbar { display: flex; background: #e1e1e1; flex: none; }
.hbar button { width: 13px; height: 14px; background: #fff; border: 1px solid #bbb; justify-content: center; }
.hbar .thumb { height: 14px; background: #cbcbcb; }
.wide { height: 18px; }
.wide .thumb { width: 70%; margin-left: 1px; }
.al, .ar { width: 4px; height: 8px; background: #666a70; clip-path: polygon(100% 0, 100% 100%, 0 50%); }
.ar { clip-path: polygon(0 0, 100% 50%, 0 100%); }
.au, .ad { width: 8px; height: 5px; background: #666a78; clip-path: polygon(50% 0, 100% 100%, 0 100%); }
.ad { clip-path: polygon(0 0, 100% 0, 50% 100%); }

.lower { flex: 0 0 139px; overflow: hidden; border-right: 2px solid #dadada; }
.ltabs { height: 39px; padding-top: 8px; border-bottom: 1px solid #7cc56a; margin-bottom: 1px; display: flex; }
.ltabs a { background: #7cc467; color: #fff; font-size: 13px; line-height: 32px; height: 30px; padding: 0 12px; }
.grid2 .lock { text-align: left; padding-left: 3px; }
.red, .blue { font: bold 12px/14px "Liberation Mono", monospace; }
.red { color: #f00; background: #9fdbfb; }
.blue { color: #00f; }
.grid2 td.edit { padding: 0; outline: 1px solid #3aa8d8; outline-offset: -1px; }
.edit div { display: flex; justify-content: space-between; align-items: center; padding: 0 2px 0 4px; }
.edit input { width: 80px; height: 14px; border: 0; padding: 0; background: #a3c2ec; color: #555; font: 12px/14px "Noto Sans CJK SC", sans-serif; }
.edit button { width: 22px; height: 14px; border: 1px solid #74abdc; border-radius: 3px; background: #edf4fb; color: #2a86cc; justify-content: center; font: bold 10px/10px "DejaVu Sans", sans-serif; }
input[type=checkbox] { appearance: none; display: block; width: 12px; height: 12px; margin: 0 auto; border: 1px solid #999; background: #fff; }
.box2 input[type=checkbox] { margin-left: 19px; }

/* query dialog */
.dialog { position: absolute; left: 231px; right: 243px; top: 91px; bottom: 68px; border: 1px solid #9f9fa3; background: #f1f1f1; display: flex; flex-direction: column; }
.dtitle { height: 31px; flex: none; background: #03a7f1; color: #fff; display: flex; align-items: center; padding: 0 14px 0 11px; gap: 5px; }
.dmax { margin-left: auto; }
.dcls { margin-left: 12px; }
.dtabs { height: 31px; flex: none; display: flex; border-bottom: 1px solid #7cc467; padding-right: 5px; }
.t1 { width: 68px; justify-content: center; background: #7cc467; color: #fff; font-size: 13px; font-weight: 700; }
.t2 { width: 80px; justify-content: center; background: #fff; border: solid #b5dfa6; border-width: 1px 1px 0 0; color: #000; }
.act { width: 85px; height: 25px; margin: 3px 0 0 6px; justify-content: center; border: 1px solid #adadad; color: #000; }
.act .s { font: 12px/16px "Liberation Serif", serif; margin-left: 3px; }
.dbody { flex: 1; min-height: 0; display: flex; gap: 1px; padding: 4px; }
.lpane { width: 280px; flex: none; display: flex; flex-direction: column; }
.combo { height: 26px; border: 1px solid #a9a9a9; background: #fff; display: flex; align-items: center; padding-right: 4px; overflow: hidden; }
.combo select { appearance: none; width: 265px; height: 24px; border: 0; padding: 0 0 0 1px; background: none; font: 12px/20px "Noto Sans CJK SC", sans-serif; color: #000; margin-right: 3px; }
.search { height: 22px; margin: 3px 0; border: 1px solid #a9a9a9; padding: 0 1px; font: 12px/18px "Noto Sans CJK SC", sans-serif; flex: none; }
.search::placeholder { color: #858585; }
.treebox { flex: 1; min-height: 0; border: 1px solid #7f8590; background: #fff; display: flex; overflow: hidden; }
.nodes { flex: 1; overflow: hidden; color: #000; }
.nodes li { height: 21px; line-height: 21px; white-space: nowrap; display: flex; align-items: center; }
.nodes .l1 { padding-left: 23px; } .nodes .l2 { padding-left: 43px; } .nodes .l3 { padding-left: 63px; }
.nodes .act3 { color: #0c8df5; }
.nodes .open::before { content: ""; width: 7px; height: 7px; margin: 0 8px 0 -15px; background: #444; clip-path: polygon(100% 0, 100% 100%, 0 100%); }
.vbar { width: 15px; flex: none; display: flex; flex-direction: column; background: #d3d3d3; }
.vbar button { height: 14px; justify-content: center; background: #fff; border: 1px solid #a9a9a9; }
.vthumb { flex: 122 1 0; background: #fff; border: 1px solid #a9a9a9; border-bottom-width: 2px; margin-top: 1px; }
.vtrack { flex: 241 1 0; }
.rpane { flex: 1; min-width: 0; position: relative; border: 1px solid #80868f; background: #fff; overflow: hidden; display: flex; flex-direction: column; justify-content: space-between; }
.grid3 { width: calc(100% + 17px); border-top: 0; }
.grid3 th, .grid3 td { height: 26px; }
.grid3 .hsel { background: #ffecb3; font-weight: 700; border-bottom: 2px solid #3aa8d8; }
.grid3 .iv { background: #fffffa; }
.grid3 .focus { outline: 2px solid #3aa8d8; outline-offset: -2px; }
.grid3 td.far { padding-right: 14px; }
.inner { height: 17px; padding: 0 1px; }
.inner .thumb { width: 387px; margin-left: 1px; }
.mark { position: absolute; left: 202px; top: 219px; }
```
